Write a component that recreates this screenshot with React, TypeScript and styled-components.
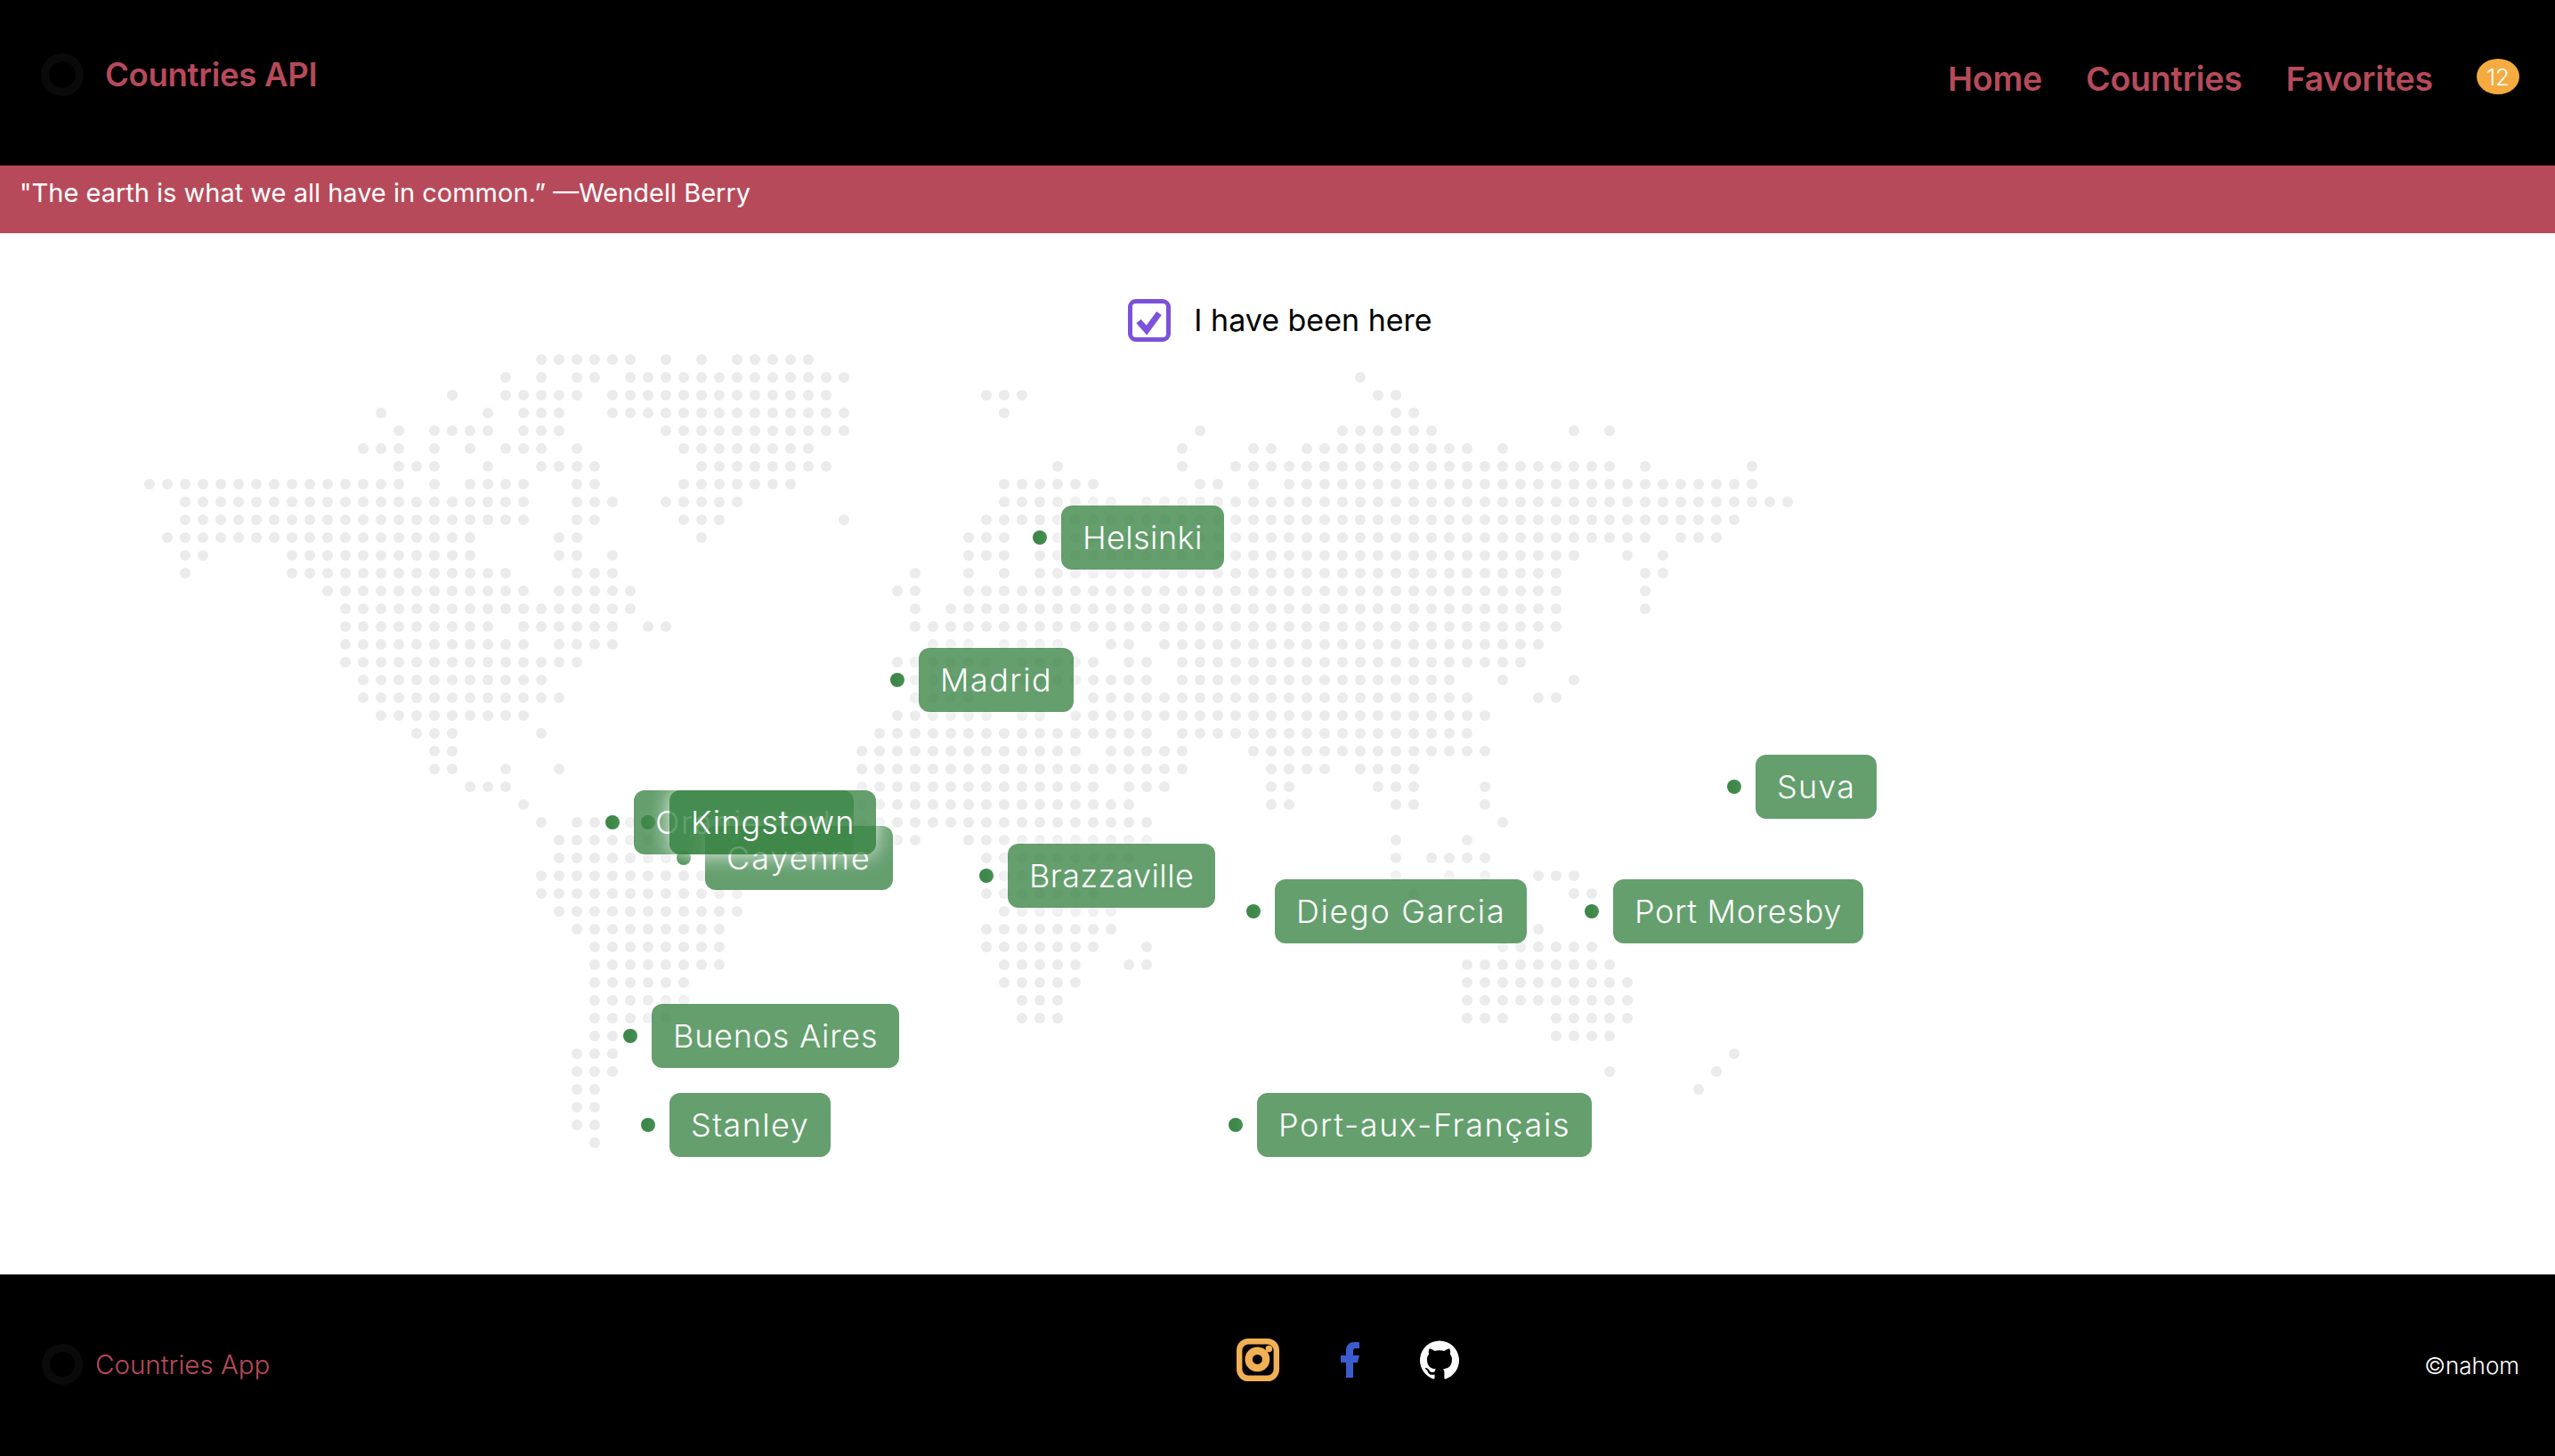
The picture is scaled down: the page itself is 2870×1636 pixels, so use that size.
import React from 'react';
import styled, { createGlobalStyle } from 'styled-components';
import { RiFacebookFill } from 'react-icons/ri';
import { SiGithub } from 'react-icons/si';

// dotted world map: one entry per row, column ranges on a 20px pitch
const MAP_ROWS = [
  '22-27 29 31 33-37',
  '20 22 24 25 27-39 68',
  '17 20-24 26-38 47-49 69 70',
  '13 19 21-23 26-39 48 70 71',
  '14 16-19 21-23 29-39 59 67-72 80 82',
  '12-14 16 18 20-22 24 30-37 58 62 63 65-74 76',
  '14-16 19 22-25 31-38 51 58 61-82 84 90',
  '0-14 16 18-21 24 25 30-36 48-53 59 60 62 64-90',
  '2-21 24-26 29-33 48-54 56-92',
  '2-21 24 25 30-32 39 47-89',
  '1-18 23 24 31 46-48 50-84 86-88',
  '2 3 8-18 23 24 26 46-48 50-80 83 85',
  '2 8-20 24-26 43 46 48 50-79 84 85',
  '10-21 23-27 42 43 46-79 84',
  '11-27 43 45-79 84',
  '11-19 21-26 28 29 43-79',
  '11-21 23-26 44-46 48-51 54 55 57-78',
  '11-24 42-47 49-53 55 56 58-77',
  '12-22 43-47 49-56 58-73 76 80',
  '12-23 43-46 53-74 78 79',
  '13-21 42-47 49 50 52-75',
  '15-17 22 41-56 58-74',
  '16 17 40-52 54-58 62-75',
  '16 17 20 23 40-58 63-66 68-71',
  '18-20 40-53 55-57 63 64 69-71 75',
  '21 40-55 63 64 70 71 75',
  '22 24-29 40-56 76',
  '23-29 41-43 46-56 70 74',
  '23-30 47-55 70 72-75',
  '22-31 47-53 70 73 75 78-80',
  '22-33 47-53 71 80 81',
  '23-33 48-54',
  '24-32 47-54 78',
  '25-32 47-53 56 76-81',
  '25-32 48-52 55 56 74-82',
  '25-30 48-52 74-83',
  '25-30 49-51 74-83',
  '25-29 49-51 74-76 79-83',
  '25 26 79-82',
  '24-26 89',
  '24-26 82 88',
  '24 25 87',
  '24 25',
  '24 25',
  '25',
];

const DOT_PITCH = 20;
const MAP_LEFT = 168;
const MAP_TOP = 404;
const CANVAS_TOP = 392;

const PINS = [
  { name: 'Helsinki', x: 1168, y: 604, track: 0.4 },
  { name: 'Madrid', x: 1008, y: 764, track: 1.5 },
  { name: 'Suva', x: 1948, y: 884, track: 1.2 },
  { name: 'Oranjestad', x: 688, y: 924, track: 1.7 },
  { name: 'Cayenne', x: 768, y: 964, track: 2 },
  { name: 'Kingstown', x: 728, y: 924, track: 1 },
  { name: 'Brazzaville', x: 1108, y: 984, track: 0.45 },
  { name: 'Diego Garcia', x: 1408, y: 1024, track: 1.65 },
  { name: 'Port Moresby', x: 1788, y: 1024, track: 0.7 },
  { name: 'Buenos Aires', x: 708, y: 1164, track: 0.75 },
  { name: 'Stanley', x: 728, y: 1264, track: 1.4 },
  { name: 'Port-aux-Français', x: 1388, y: 1264, track: 1.65 },
];

const parseRow = (row: string) =>
  row.split(' ').flatMap((part) => {
    const [from, to] = part.split('-').map(Number);
    const cols: number[] = [];
    for (let c = from; c <= (to ?? from); c++) cols.push(c);
    return cols;
  });

const DottedMap = () => (
  <MapSvg viewBox="0 0 2870 1040">
    {MAP_ROWS.map((row, r) =>
      parseRow(row).map((c) => (
        <circle
          key={`${r}-${c}`}
          cx={MAP_LEFT + c * DOT_PITCH}
          cy={MAP_TOP - CANVAS_TOP + r * DOT_PITCH}
          r="6"
          fill="#ebebeb"
        />
      ))
    )}
  </MapSvg>
);

const InstagramIcon = () => (
  <svg width="48" height="48" viewBox="0 0 48 48" fill="none">
    <rect x="3.2" y="3.2" width="41.6" height="41.6" rx="10" stroke="#f2b055" strokeWidth="6.4" />
    <circle cx="23.4" cy="23.4" r="9.7" stroke="#f2b055" strokeWidth="8.4" />
    <circle cx="36.4" cy="11.6" r="3.8" fill="#f2b055" />
  </svg>
);

function App() {
  return (
    <Page>
      <GlobalStyle />
      <Header>
        <Brand>
          <Ring $size={48} />
          <BrandName>Countries API</BrandName>
        </Brand>
        <Nav>
          <NavLink>Home</NavLink>
          <NavLink>Countries</NavLink>
          <NavLink>Favorites</NavLink>
          <Badge>12</Badge>
        </Nav>
      </Header>
      <Quote>"The earth is what we all have in common.” —Wendell Berry</Quote>
      <Main>
        <CheckRow>
          <CheckBox>
            <svg width="38" height="38" viewBox="0 0 38 38" fill="none">
              <path d="M7 20 L16 30 L30 11" stroke="#7b52d9" strokeWidth="7" />
            </svg>
          </CheckBox>
          <CheckLabel>I have been here</CheckLabel>
        </CheckRow>
        <MapCanvas>
          <DottedMap />
          {PINS.map((pin) => (
            <Pin key={pin.name} $x={pin.x - 8} $y={pin.y - 36 - CANVAS_TOP}>
              <Marker />
              <PinLabel $track={pin.track}>{pin.name}</PinLabel>
            </Pin>
          ))}
        </MapCanvas>
      </Main>
      <Footer>
        <FooterBrand>
          <Ring $size={46} />
          <FooterName>Countries App</FooterName>
        </FooterBrand>
        <Socials>
          <InstagramIcon />
          <FacebookLink>
            <RiFacebookFill size={48} />
          </FacebookLink>
          <GithubLink>
            <SiGithub size={44} />
          </GithubLink>
        </Socials>
        <Credit>©nahom</Credit>
      </Footer>
    </Page>
  );
}

export default App;

const GlobalStyle = createGlobalStyle`
  html, body {
    margin: 0;
    padding: 0;
    background: #fff;
  }
  * {
    box-sizing: border-box;
  }
`;

const Page = styled.div`
  width: 2870px;
  height: 1636px;
  display: flex;
  flex-direction: column;
  font-family: Inter, "Noto Sans", sans-serif;
  overflow: hidden;
`;

const Header = styled.header`
  height: 186px;
  flex: none;
  background: #000;
  display: flex;
  justify-content: space-between;
  align-items: flex-start;
  padding: 60px 40px 0 46px;
`;

const Brand = styled.div`
  display: flex;
  align-items: center;
  gap: 24px;
`;

const Ring = styled.div<{ $size: number }>`
  width: ${(p) => p.$size}px;
  height: ${(p) => p.$size}px;
  border-radius: 50%;
  border: 9px solid #0a0a0a;
`;

const BrandName = styled.div`
  font-size: 36.5px;
  font-weight: 600;
  letter-spacing: -0.3px;
  line-height: 44px;
  color: #b74a5a;
`;

const Nav = styled.nav`
  display: flex;
  align-items: flex-start;
  gap: 49px;
  padding-top: 6px;
`;

const NavLink = styled.a`
  font-size: 37.5px;
  line-height: 46px;
  font-weight: 600;
  letter-spacing: -0.2px;
  color: #b74a5a;
`;

const Badge = styled.span`
  width: 48px;
  height: 40px;
  border-radius: 50%;
  background: #f4ab3f;
  color: #fff;
  font-size: 26px;
  font-weight: 300;
  display: flex;
  align-items: center;
  justify-content: center;
`;

const Quote = styled.div`
  height: 76px;
  flex: none;
  background: #b74a5a;
  color: #fff;
  font-size: 29px;
  font-weight: 400;
  line-height: 34px;
  padding: 14px 22px 0;
`;

const Main = styled.main`
  flex: 1;
  background: #fff;
  padding-top: 74px;
  display: flex;
  flex-direction: column;
`;

const CheckRow = styled.label`
  display: flex;
  align-items: center;
  justify-content: center;
  gap: 26px;
  height: 48px;
  flex: none;
  padding-left: 6px;
`;

const CheckBox = styled.div`
  width: 48px;
  height: 48px;
  border: 5px solid #7b52d9;
  border-radius: 9px;
  display: flex;
  align-items: center;
  justify-content: center;
`;

const CheckLabel = styled.span`
  font-size: 34px;
  font-weight: 400;
  color: #000;
  margin-bottom: 2px;
`;

const MapCanvas = styled.div`
  position: relative;
  margin-top: 8px;
  flex: 1;
`;

const MapSvg = styled.svg`
  display: block;
  width: 2870px;
  height: 1040px;
`;

const Pin = styled.div<{ $x: number; $y: number }>`
  position: absolute;
  left: ${(p) => p.$x}px;
  top: ${(p) => p.$y}px;
  display: flex;
  align-items: center;
  gap: 16px;
`;

const Marker = styled.span`
  width: 16px;
  height: 16px;
  flex: none;
  border-radius: 50%;
  background: #3d8749;
`;

const PinLabel = styled.span<{ $track: number }>`
  height: 72px;
  padding: 0 24px;
  border-radius: 12px;
  background: rgba(61, 135, 73, 0.8);
  box-shadow: 0 0 24px rgba(255, 255, 255, 0.9);
  color: #fff;
  font-size: 36px;
  font-weight: 300;
  letter-spacing: ${(p) => p.$track}px;
  line-height: 72px;
  white-space: nowrap;
`;

const Footer = styled.footer`
  height: 204px;
  flex: none;
  background: #000;
  display: grid;
  grid-template-columns: 1342px auto 1fr;
  align-items: start;
  padding: 72px 40px 0 47px;
`;

const FooterBrand = styled.div`
  display: flex;
  align-items: center;
  gap: 14px;
  margin-top: 6px;
`;

const FooterName = styled.div`
  font-size: 29.5px;
  font-weight: 300;
  color: #b74a5a;
`;

const Socials = styled.div`
  display: flex;
  align-items: center;
  gap: 55px;
`;

const FacebookLink = styled.a`
  display: flex;
  color: #3b5bcf;
`;

const GithubLink = styled.a`
  display: flex;
  color: #fff;
`;

const Credit = styled.div`
  justify-self: end;
  margin-top: 15px;
  font-size: 26px;
  font-weight: 300;
  color: #fff;
`;
